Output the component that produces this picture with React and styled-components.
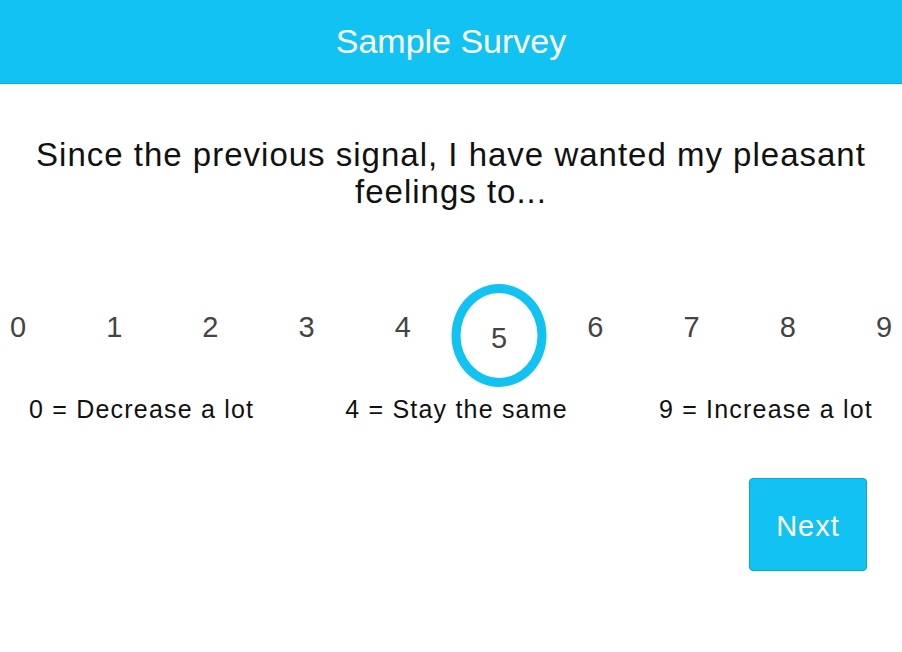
import React from "react";
import styled, { createGlobalStyle } from "styled-components";

const GlobalStyle = createGlobalStyle`
  html, body {
    margin: 0;
    padding: 0;
    background: #fff;
    font-family: "Liberation Sans", Arial, sans-serif;
  }
`;

const Header = styled.header`
  height: 83px;
  background-color: #12c2f2;
  border-bottom: 1px solid #0ea8d6;
  display: flex;
  align-items: center;
  justify-content: center;

  h1 {
    margin: 0;
    font-size: 34px;
    font-weight: normal;
    color: #fff;
  }
`;

const Question = styled.p`
  margin: 52px 0 0;
  padding: 0 20px;
  text-align: center;
  font-size: 33px;
  line-height: 37px;
  letter-spacing: 1px;
  color: #111;
`;

const Scale = styled.div`
  display: flex;
  justify-content: space-between;
  align-items: flex-start;
  margin-top: 100px;
`;

const Num = styled.div`
  position: relative;
  width: 36px;
  text-align: center;
  font-size: 29px;
  line-height: 34px;
  color: #444;
  padding-top: ${(p) => (p.$selected ? "11px" : "0")};

  &::before {
    content: "";
    display: ${(p) => (p.$selected ? "block" : "none")};
    position: absolute;
    box-sizing: border-box;
    width: 95px;
    height: 103px;
    left: 50%;
    top: -26px;
    transform: translateX(-50%);
    border: 9px solid #12c2f2;
    border-radius: 50%;
  }
`;

const Labels = styled.div`
  display: flex;
  justify-content: space-between;
  padding: 0 29px;
  margin-top: 40px;
  font-size: 25px;
  line-height: 28px;
  letter-spacing: 1.2px;
  color: #111;
`;

const Footer = styled.div`
  display: flex;
  justify-content: flex-end;
  padding-right: 35px;
  margin-top: 55px;
`;

const NextButton = styled.button`
  width: 118px;
  height: 93px;
  padding-top: 5px;
  background-color: #12c2f2;
  border: 1px solid #0ea5d0;
  border-radius: 4px;
  color: #fff;
  font-family: "Liberation Sans", Arial, sans-serif;
  font-size: 29px;
  letter-spacing: 1px;
  cursor: pointer;
`;

const values = [0, 1, 2, 3, 4, 5, 6, 7, 8, 9];

const App = () => {
  const selected = 5;
  return (
    <>
      <GlobalStyle />
      <Header>
        <h1>Sample Survey</h1>
      </Header>
      <Question>
        Since the previous signal, I have wanted my pleasant feelings to...
      </Question>
      <Scale>
        {values.map((v) => (
          <Num key={v} $selected={v === selected}>
            {v}
          </Num>
        ))}
      </Scale>
      <Labels>
        <span>0 = Decrease a lot</span>
        <span>4 = Stay the same</span>
        <span>9 = Increase a lot</span>
      </Labels>
      <Footer>
        <NextButton>Next</NextButton>
      </Footer>
    </>
  );
};

export default App;
